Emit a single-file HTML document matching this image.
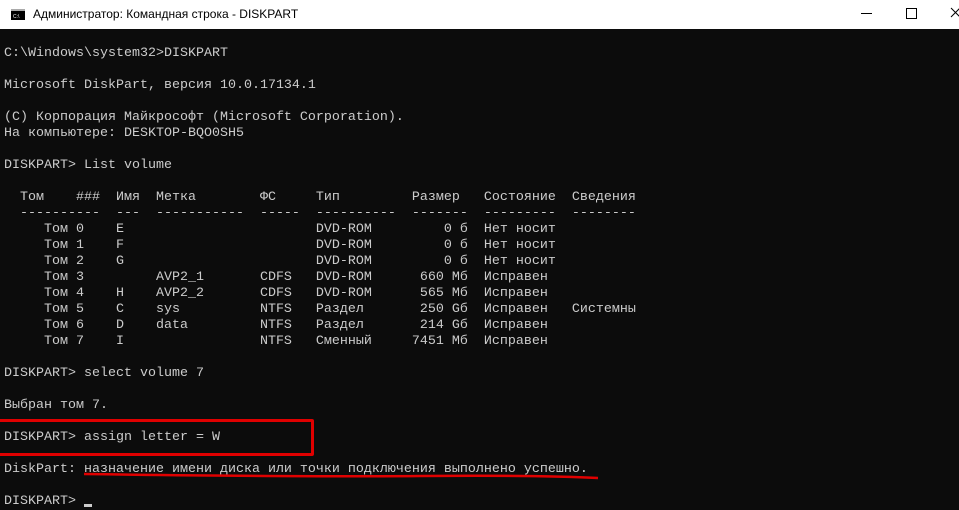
<!DOCTYPE html>
<html><head><meta charset="utf-8"><style>
html,body{margin:0;padding:0;width:959px;height:508px;overflow:hidden;background:#0c0c0c}
.tb{position:absolute;left:0;top:0;width:959px;height:29px;background:#fff}
.tt{position:absolute;left:33px;top:7px;font:12px "Liberation Sans",sans-serif;color:#000;white-space:nowrap}
pre{position:absolute;left:4px;top:46px;margin:0;font-family:"Liberation Mono","DejaVu Sans Mono",monospace;font-size:13.33px;line-height:16px;color:#cccccc}
</style></head><body>
<div class="tb">
<svg style="position:absolute;left:11px;top:9px" width="14" height="11"><rect x="0" y="0" width="14" height="11" fill="#000"/><rect x="0" y="0" width="14" height="2" fill="#aaa"/><text x="2" y="9" font-size="5" fill="#fff" font-family="Liberation Sans">C:\</text></svg>
<div class="tt">Администратор: Командная строка - DISKPART</div>
<div style="position:absolute;left:861px;top:13px;width:11px;height:1px;background:#000"></div>
<div style="position:absolute;left:906px;top:8px;width:9px;height:9px;border:1px solid #000"></div>
<svg style="position:absolute;left:950px;top:7px" width="9" height="12"><path d="M1 1L10 10M10 1L1 10" stroke="#000" stroke-width="1"/></svg>
</div>
<pre>C:\Windows\system32&gt;DISKPART

Microsoft DiskPart, версия 10.0.17134.1

(C) Корпорация Майкрософт (Microsoft Corporation).
На компьютере: DESKTOP-BQO0SH5

DISKPART&gt; List volume

  Том    ###  Имя  Метка        ФС     Тип         Размер   Состояние  Сведения
  ----------  ---  -----------  -----  ----------  -------  ---------  --------
     Том 0    E                        DVD-ROM         0 б  Нет носит
     Том 1    F                        DVD-ROM         0 б  Нет носит
     Том 2    G                        DVD-ROM         0 б  Нет носит
     Том 3         AVP2_1       CDFS   DVD-ROM      660 Мб  Исправен
     Том 4    H    AVP2_2       CDFS   DVD-ROM      565 Мб  Исправен
     Том 5    C    sys          NTFS   Раздел       250 Gб  Исправен   Системны
     Том 6    D    data         NTFS   Раздел       214 Gб  Исправен
     Том 7    I                 NTFS   Сменный     7451 Мб  Исправен

DISKPART&gt; select volume 7

Выбран том 7.

DISKPART&gt; assign letter = W

DiskPart: назначение имени диска или точки подключения выполнено успешно.

DISKPART&gt; </pre>
<div style="position:absolute;left:84px;top:504px;width:8px;height:3px;background:#ccc"></div>
<div style="position:absolute;left:-3px;top:419px;width:311px;height:31px;border:3px solid #e00000;border-radius:2px"></div>
<svg style="position:absolute;left:0;top:468px" width="620" height="16"><path d="M84 6 Q300 9 420 8 T598 10" stroke="#e00000" stroke-width="2.5" fill="none"/></svg>
</body></html>
